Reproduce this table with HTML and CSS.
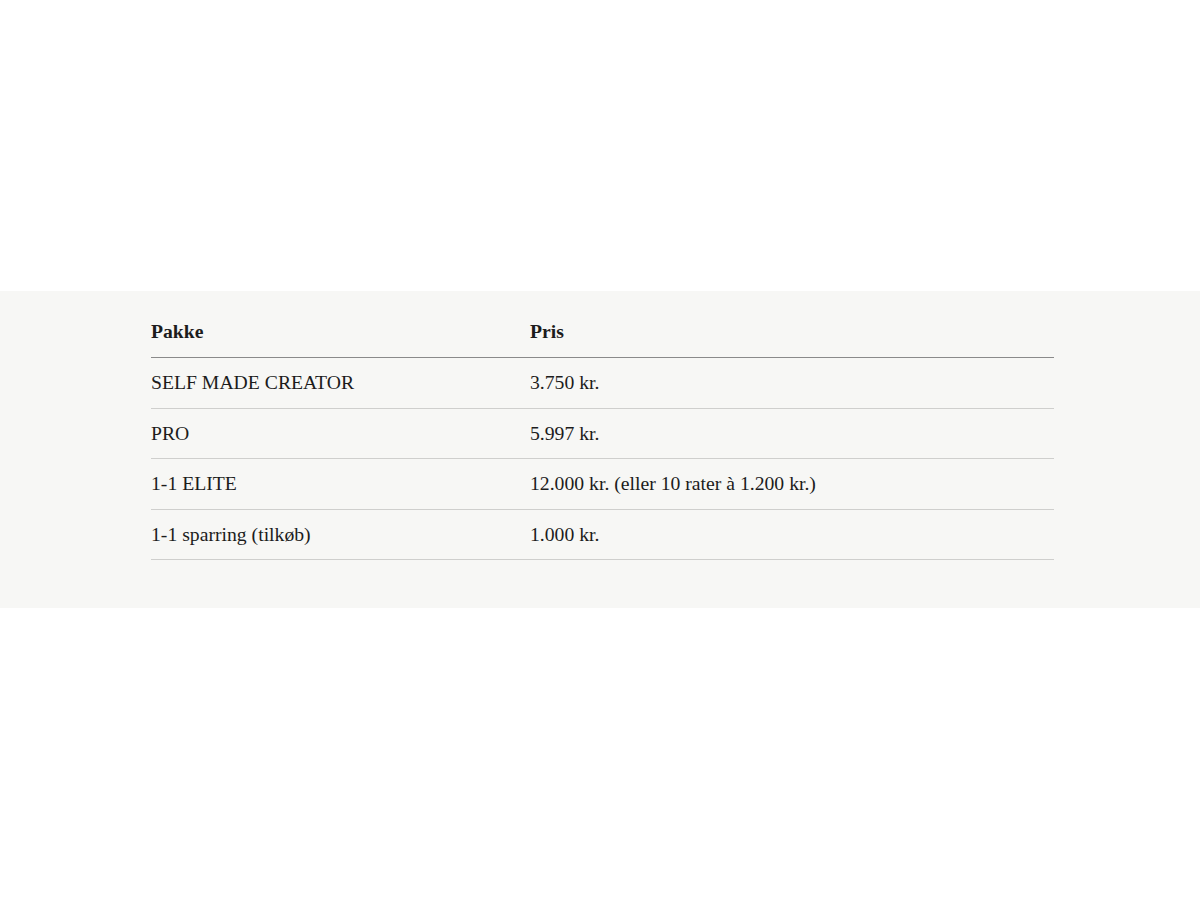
FILE: index.html
```html
<!DOCTYPE html>
<html lang="da">
<head>
<meta charset="utf-8">
<title>Priser</title>
<link rel="stylesheet" href="styles.css">
</head>
<body>
<section class="band">
  <table class="prices">
    <thead>
      <tr><th class="col-name">Pakke</th><th>Pris</th></tr>
    </thead>
    <tbody>
      <tr><td>SELF MADE CREATOR</td><td>3.750 kr.</td></tr>
      <tr><td>PRO</td><td>5.997 kr.</td></tr>
      <tr><td>1-1 ELITE</td><td>12.000 kr. (eller 10 rater à 1.200 kr.)</td></tr>
      <tr><td>1-1 sparring (tilkøb)</td><td>1.000 kr.</td></tr>
    </tbody>
  </table>
</section>
</body>
</html>
```

FILE: styles.css
```css
html, body {
  margin: 0;
  padding: 0;
  background: #ffffff;
}
body {
  font-family: "Liberation Serif", "DejaVu Serif", serif;
  color: #1c1c1c;
  padding-top: 291px;
  height: 900px;
  box-sizing: border-box;
}
.band {
  background: #f7f7f5;
  padding: 16px 146px 48px 151px;
}
.prices {
  width: 903px;
  border-collapse: collapse;
  font-size: 19.7px;
}
.prices th,
.prices td {
  text-align: left;
  padding: 0;
  vertical-align: middle;
}
.prices th {
  font-weight: bold;
  height: 48px;
  padding-bottom: 2px;
  border-bottom: 1px solid #8a8a8a;
}
.prices td {
  height: 49.5px;
  border-bottom: 1px solid #cfcfcd;
}
.col-name {
  width: 379px;
}
```
